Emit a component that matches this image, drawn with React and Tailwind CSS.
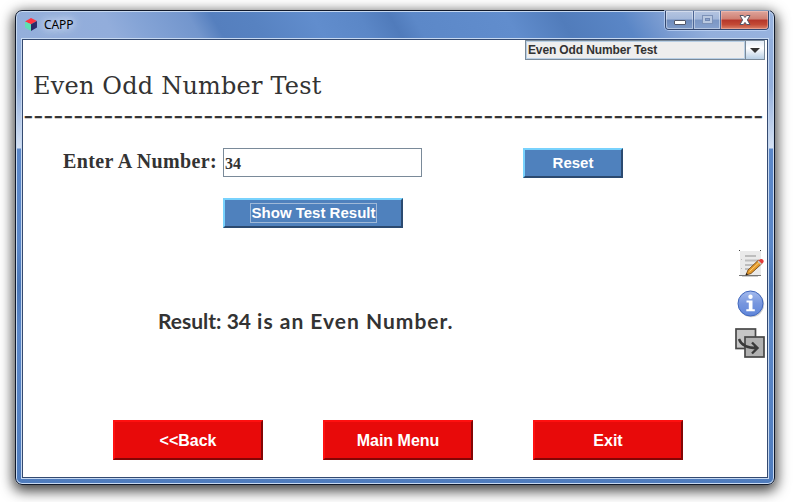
import React from "react";

const DASHES = "-".repeat(74);

function CubeIcon() {
  return (
    <svg width="12" height="13" viewBox="0 0 12 13" className="block">
      <path d="M6 0 12 3 6 6.2 0 3.4Z" fill="#ff3340" />
      <path d="M0 3.4 6 6.2V13L0 9.5Z" fill="#5fe0b4" />
      <path d="M12 3V9.5L6 13V6.2Z" fill="#2b2766" />
    </svg>
  );
}

function WindowControls() {
  return (
    <div className="flex h-[19px] w-[104px] rounded-b-[4px] border border-t-0 border-[#33476f] shadow-[0_0_0_1px_rgba(200,220,250,0.65)]">
      <div className="flex w-[28px] items-start justify-center rounded-bl-[3px] border-r border-[#4c6594] bg-[linear-gradient(#b5c5e1_0%,#a4b8da_45%,#6d8abb_50%,#7f9bc9_100%)] shadow-[inset_0_0_0_1px_rgba(255,255,255,0.4)]">
        <svg width="14" height="18" viewBox="0 0 14 18">
          <rect x="1.5" y="9.5" width="11" height="4" rx="0.5" fill="#fff" stroke="#53586a" />
        </svg>
      </div>
      <div className="flex w-[27px] items-start justify-center border-r border-[#4c6594] bg-[linear-gradient(#b5c5e1_0%,#a4b8da_45%,#7b96c4_50%,#86a1ce_100%)] shadow-[inset_0_0_0_1px_rgba(255,255,255,0.4)]">
        <svg width="13" height="18" viewBox="0 0 13 18" fill="none">
          <rect x="1.5" y="4.5" width="10" height="8" fill="#b9c8e0" stroke="#7d92b8" />
          <rect x="4.5" y="7.5" width="4" height="2" fill="#8aa2cb" stroke="#7288b2" />
        </svg>
      </div>
      <div className="flex flex-1 items-start justify-center rounded-br-[3px] bg-[linear-gradient(#dfa59c_0%,#cf7f72_45%,#b5362a_50%,#c34a36_75%,#d9826a_100%)] shadow-[inset_0_0_0_1px_rgba(255,210,200,0.4)]">
        <svg width="14" height="18" viewBox="0 0 14 18">
          <path d="M2 4.5h3.4L7 6.5l1.6-2H12L9.400 9l2.600 4.500H8.600L7 11.400l-1.600 2.100H2L4.600 9Z" fill="#fff" stroke="#535666" strokeLinejoin="round" />
        </svg>
      </div>
    </div>
  );
}

function NoteIcon() {
  return (
    <svg width="26" height="28" viewBox="0 0 26 28" className="block">
      <rect x="1" y="1" width="21" height="25" fill="#eaeaea" />
      <path d="M0 25.5h22" stroke="#777" />
      <path d="M3 26.5h16" stroke="#ccc" />
      <path d="M0 0h1v1H0zM21 0h1v1h-1z" fill="#444" />
      <path d="M6 6h11M6 10.500h13M6 15h10M6 19h6" stroke="#bdbdbd" strokeWidth="2" />
      <path d="M2.500 9v1M2.500 18v1" stroke="#bbb" />
      <path d="m7 25 2-5L19.500 10 23 13.500 12 23.500Z" fill="#e49a2c" stroke="#7a4a12" strokeWidth=".9" />
      <path d="M10.500 21.500 20.500 12" stroke="#ffd27a" />
      <path d="m19.500 10.500 1.500-1.300q2-.8 3 .5 1.200 1.200.3 2.800L22.500 14Z" fill="#e33b37" />
      <path d="m18.600 11.400 1-1 3.400 3.600-1 1Z" fill="#c9c9c9" />
      <path d="m6.500 25.500 1-2.500 1.500 1.500Z" fill="#222" />
    </svg>
  );
}

function InfoIcon() {
  return (
    <svg width="28" height="28" viewBox="0 0 28 28" className="block">
      <defs>
        <linearGradient id="info" x1="0" y1="0" x2="0" y2="1">
          <stop offset="0" stopColor="#a4bbee" />
          <stop offset=".5" stopColor="#7796de" />
          <stop offset="1" stopColor="#5f86da" />
        </linearGradient>
      </defs>
      <circle cx="14.4" cy="14.4" r="12.8" fill="#d0d0d0" />
      <circle cx="13.500" cy="13.500" r="12.500" fill="url(#info)" stroke="#3f66bd" />
      <circle cx="13.500" cy="6.700" r="2.200" fill="#fff" />
      <path d="M9.500 10.500h6v8.800h2.300v2H9.300v-2h2.500v-6.800H9.500Z" fill="#fff" />
    </svg>
  );
}

function SwitchIcon() {
  return (
    <svg width="30" height="30" viewBox="0 0 30 30" className="block">
      <rect x="1" y="1" width="19.500" height="19.500" fill="#c6c6c6" stroke="#484848" strokeWidth="1.700" />
      <rect x="10" y="9" width="19" height="20" fill="#b1b1b1" stroke="#484848" strokeWidth="1.700" />
      <path
        d="M4 11Q7 20 22 20M17 14.500 22.500 20 17 25.500"
        fill="none"
        stroke="#3a3a3a"
        strokeWidth="2.400"
      />
    </svg>
  );
}

function BlueButton({ className, children }) {
  return (
    <button
      className={
        "flex h-[30px] items-center justify-center border-2 border-t-[#78d2fd] border-l-[#78d2fd] border-r-[#2b4a70] border-b-[#2b4a70] bg-[#4f81bd] font-['Liberation_Sans',sans-serif] text-[15px] leading-none font-bold text-white " +
        className
      }
    >
      {children}
    </button>
  );
}

function RedButton({ children }) {
  return (
    <button className="flex h-10 w-[150px] items-center justify-center border-2 border-t-[#ff1010] border-r-[#830505] border-b-[#830505] border-l-[#ff1010] bg-[#e80a0a] pt-[2px] font-['Liberation_Sans',sans-serif] text-[16px] leading-none font-bold text-white">
      {children}
    </button>
  );
}

export default function App() {
  return (
    <div className="h-[502px] w-[798px] overflow-hidden bg-white pt-[10px] pl-[15px] text-[#333333]">
      <div className="flex h-[475px] w-[760px] flex-col rounded-[7px] border border-[#10192b] bg-[linear-gradient(60deg,#94afdb_0%,#92addb_13%,#85a4d6_17%,#7396cd_24%,#557fbe_27%,#5782c1_32%,#618dcd_40%,#5b87c7_46%,#507bbb_50%,#5c88c8_53%,#618dcd_65%,#517cbb_72%,#5a86c6_80%,#7c9dd2_85%,#93afdc_90%,#98b3df_100%),linear-gradient(180deg,#92aedb_0,#92aedb_75px,#d5e1f3_137px,#5b87c8_138px,#5b87c8_235px,#4a76b6_275px,#5b87c8_320px,#4f7cbd_474px)] [background-size:100%_28px,100%_100%] bg-no-repeat px-[5px] pb-[5px] shadow-[inset_0_0_0_1px_#c7d9f1,0_4px_13px_2px_rgba(0,0,0,0.75)]">
        <header className="flex h-[27px] shrink-0 items-start justify-between pl-[4px]">
          <div className="flex h-[27px] items-center gap-[7px]">
            <CubeIcon />
            <span className="pt-px font-['Noto_Sans',sans-serif] text-[12px] leading-none tracking-[-0.1px] text-black [text-shadow:0_0_6px_#dbe6f7,0_0_10px_#dbe6f7,0_0_14px_#dbe6f7]">
              CAPP
            </span>
          </div>
          <WindowControls />
        </header>

        <main className="flex h-[441px] flex-col border border-[#c7d9f1] bg-[#344a70] p-px">
          <div className="flex h-[437px] flex-col bg-white">
            <div className="flex h-5 justify-end pr-[2px]">
              <div className="flex h-5 w-[240px] border border-[#7a8a99] bg-[#eeeeee]">
                <span className="flex flex-1 items-center border border-[#b8cfe5] pl-px font-['Liberation_Sans',sans-serif] text-[12px] leading-none font-bold tracking-[-0.13px]">
                  Even Odd Number Test
                </span>
                <span className="flex w-[19px] items-center justify-center border-l border-[#7a8a99] bg-[linear-gradient(#e4edf7,#ffffff_40%,#b8cfe5)]">
                  <svg width="10" height="5" viewBox="0 0 10 5">
                    <path d="M0 0h10L5 5Z" fill="#333" />
                  </svg>
                </span>
              </div>
            </div>

            <h1 className="flex h-[50px] items-center pt-[2px] pl-[10px] font-['DejaVu_Serif',serif] text-[24px] leading-none tracking-[0.2px] whitespace-nowrap">
              Even Odd Number Test
            </h1>
            <div className="mb-[6px] h-[10px] pl-px font-['Liberation_Serif',serif] text-[26px] leading-[10px] tracking-[1.342px] whitespace-nowrap [-webkit-text-stroke:0.35px_#333333]">
              {DASHES}
            </div>

            <div className="flex h-[254px] justify-between pr-[2px]">
              <section className="flex flex-col pt-[22px] pl-[40px]">
                <div className="flex h-[30px] items-start">
                  <label className="w-[160px] pt-[3px] font-['Liberation_Serif',serif] text-[20px] leading-[20px] font-bold tracking-[0.37px] whitespace-nowrap">
                    Enter A Number:
                  </label>
                  <div className="flex h-[29px] w-[199px] items-center border border-[#7a8a99] pt-[2px] pl-px font-['Liberation_Serif',serif] text-[16px] leading-none font-bold">
                    34
                  </div>
                  <BlueButton className="ml-[101px] w-[100px] pb-[2px]">Reset</BlueButton>
                </div>
                <BlueButton className="mt-5 ml-[160px] w-[180px]">
                  <span className="flex h-5 w-[127px] items-center justify-center border border-[#9fb9d8] pb-[2px] pl-px whitespace-nowrap">
                    Show Test Result
                  </span>
                </BlueButton>
                <p className="mt-[81px] ml-[95px] font-['Lato',sans-serif] text-[21px] leading-[24px] font-bold tracking-[1px] whitespace-nowrap">
                  <span className="tracking-normal">Result: 34</span> is an Even Number.
                </p>
              </section>
              <aside className="flex w-[30px] flex-col items-end pt-[124px]">
                <NoteIcon />
                <div className="mt-[12px]">
                  <InfoIcon />
                </div>
                <div className="mt-[10px]">
                  <SwitchIcon />
                </div>
              </aside>
            </div>

            <footer className="flex gap-[60px] pt-10 pl-[90px]">
              <RedButton>&lt;&lt;Back</RedButton>
              <RedButton>Main Menu</RedButton>
              <RedButton>Exit</RedButton>
            </footer>
          </div>
        </main>
      </div>
    </div>
  );
}
